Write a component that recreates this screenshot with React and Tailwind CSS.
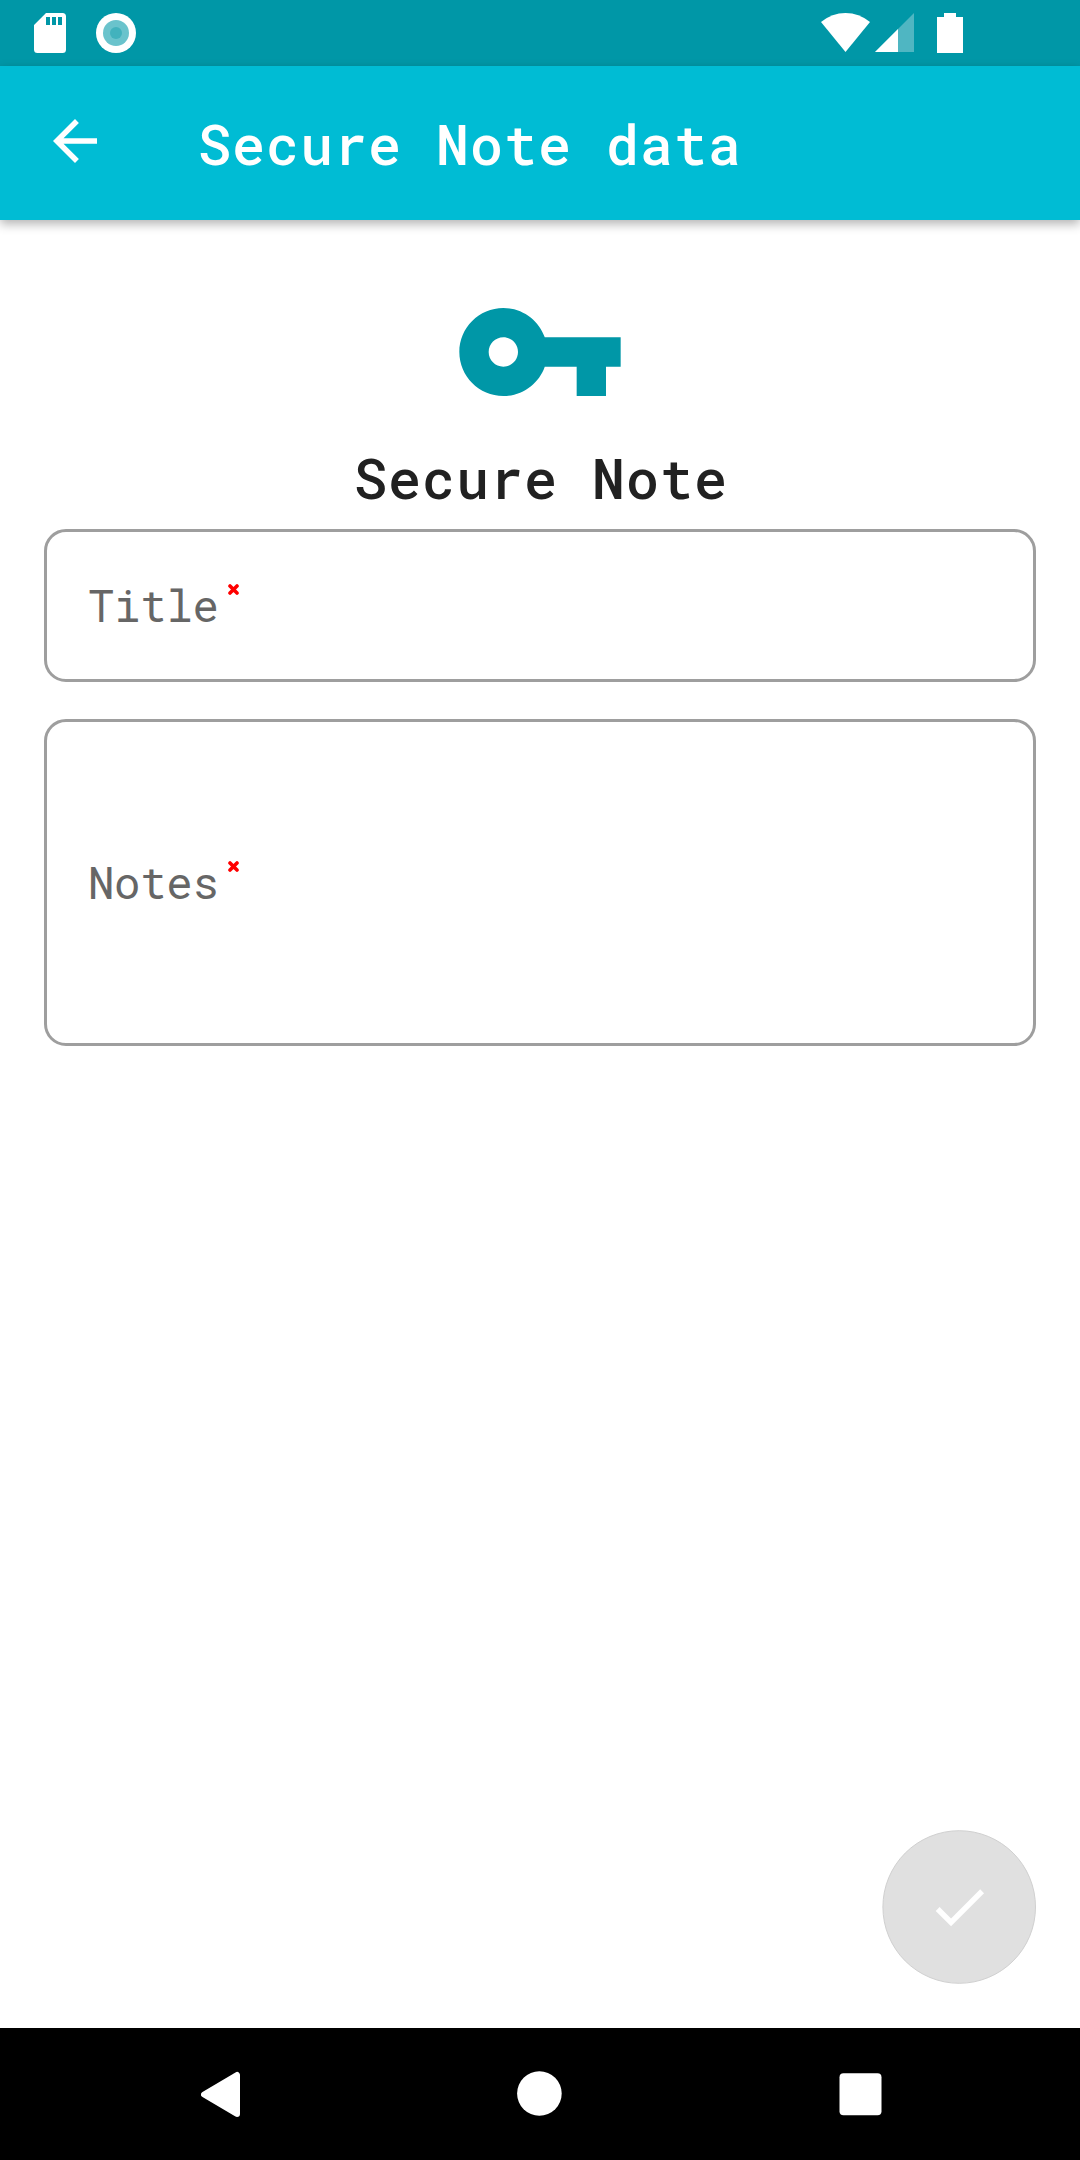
function StatusBar() {
  return (
    <div className="flex h-[66px] items-center bg-[#0097a7]">
      <svg className="ml-[34px]" width="32" height="40" viewBox="0 0 32 40">
        <path
          fill="#fff"
          fillRule="evenodd"
          d="M12 0H28.500Q32 0 32 3.500V36.500Q32 40 28.500 40H3.500Q0 40 0 36.500V12ZM12 4V12H16V4ZM18 4V12H22V4ZM24 4V12H28V4Z"
        />
      </svg>
      <svg className="ml-[30px]" width="40" height="40" viewBox="0 0 40 40">
        <circle cx="20" cy="20" r="20" fill="#fff" />
        <circle cx="20" cy="20" r="13" fill="#6ac3cc" />
        <circle cx="20" cy="20" r="6" fill="#42b2bd" />
      </svg>
      <svg className="ml-auto" width="50" height="40" viewBox="0 0 50 40">
        <path d="M0 9Q11 0 24.500 0Q38 0 49 9L24.500 39Z" fill="#fff" />
      </svg>
      <svg className="ml-[4px]" width="40" height="40" viewBox="0 0 40 40">
        <path d="M0 39L39 0V39Z" fill="#4fb6c2" />
        <path d="M0 39L23 16V39Z" fill="#fff" />
      </svg>
      <svg className="mr-[117px] ml-[22px]" width="26" height="40" viewBox="0 0 26 40">
        <path d="M7 0H19V4H26V40H0V4H7Z" fill="#fff" />
      </svg>
    </div>
  );
}

function AppBar() {
  return (
    <header className="relative flex h-[154px] items-center bg-[#00bcd4] shadow-[0_4px_10px_rgba(0,0,0,0.3)]">
      <svg className="mb-[4px] ml-[42px]" width="66" height="66" viewBox="0 0 24 24" fill="#fff">
        <path d="M20 11H7.830l5.590-5.590L12 4l-8 8 8 8 1.410-1.410L7.830 13H20v-2z" />
      </svg>
      <h1 className="ml-[90px] pt-[2px] text-[55px] leading-[72px] font-medium tracking-[1px] text-white">
        Secure Note data
      </h1>
    </header>
  );
}

function Label({ children }) {
  return (
    <div className="flex items-center pb-[2px] text-[44px] leading-[58px] tracking-[-0.3px] text-[#666666]">
      <span>{children}</span>
      <svg className="mb-[31px] ml-[9px]" width="11" height="11" viewBox="0 0 11 11">
        <path d="M2 2L9 9M9 2L2 9" stroke="#ff0000" strokeWidth="3.600" strokeLinecap="round" />
      </svg>
    </div>
  );
}

function NavBar() {
  return (
    <nav className="flex h-[132px] items-center bg-black">
      <svg className="ml-[201px]" width="39" height="46" viewBox="0 0 39 46">
        <path
          d="M3 23.500L36 4V43Z"
          fill="#fff"
          stroke="#fff"
          strokeWidth="6"
          strokeLinejoin="round"
        />
      </svg>
      <svg className="ml-[277px]" width="46" height="46" viewBox="0 0 46 46">
        <circle cx="22.400" cy="22.500" r="22.300" fill="#fff" />
      </svg>
      <svg className="ml-[276px]" width="44" height="44" viewBox="0 0 44 44">
        <rect x="0.500" y="1.200" width="42" height="42" rx="4" fill="#fff" />
      </svg>
    </nav>
  );
}

export default function App() {
  return (
    <div className="flex h-[2160px] w-[1080px] flex-col bg-white font-['Roboto_Mono',monospace]">
      <StatusBar />
      <AppBar />
      <main className="flex flex-1 flex-col px-[44px] pt-[44px]">
        <svg className="self-center" width="176" height="176" viewBox="0 0 24 24" fill="#0097a7">
          <path d="M12.650 10C11.830 7.670 9.610 6 7 6c-3.310 0-6 2.690-6 6s2.690 6 6 6c2.610 0 4.830-1.670 5.650-4H17v4h4v-4h2v-4H12.650zM7 14c-1.100 0-2-.900-2-2s.900-2 2-2 2 .900 2 2-.900 2-2 2z" />
        </svg>
        <h2 className="mt-[2px] self-center pl-[2px] text-[55px] leading-[72px] font-medium tracking-[1px] text-[#212121]">
          Secure Note
        </h2>
        <div className="mt-[15px] flex h-[153px] items-center rounded-[22px] border-[3px] border-[#9e9e9e] px-[41px]">
          <Label>Title</Label>
        </div>
        <div className="mt-[37px] flex h-[327px] items-center rounded-[22px] border-[3px] border-[#9e9e9e] px-[41px]">
          <Label>Notes</Label>
        </div>
        <button className="mt-auto mb-[44px] flex size-[154px] items-center justify-center self-end">
          <svg width="154" height="154" viewBox="0 0 154 154">
            <circle cx="77.200" cy="77" r="76.300" fill="#e0e0e0" stroke="#d0d0d0" />
            <path
              transform="translate(44.300 44) scale(2.750)"
              fill="#fff"
              d="M9 16.170L4.830 12l-1.420 1.410L9 19 21 7l-1.410-1.410z"
            />
          </svg>
        </button>
      </main>
      <NavBar />
    </div>
  );
}
